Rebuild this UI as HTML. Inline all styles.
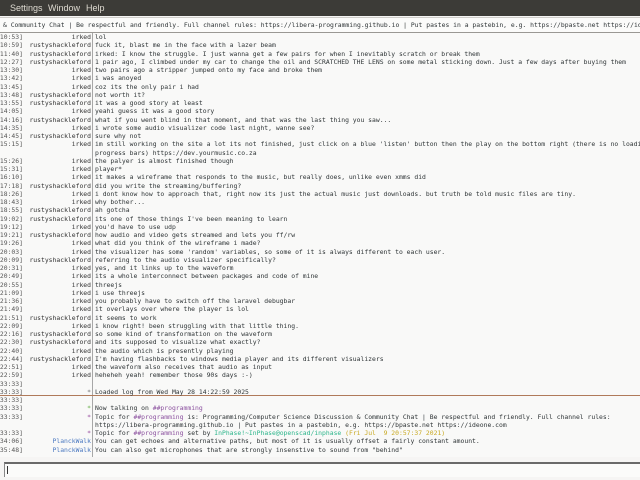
<!DOCTYPE html>
<html><head><meta charset="utf-8"><style>
html,body{margin:0;padding:0;width:640px;height:480px;overflow:hidden;background:#f6f5f4;}
#menu{position:absolute;left:0;top:0;width:640px;height:16px;background:#3c3b37;color:#dfdbd2;font:9px "Liberation Sans",sans-serif;}
#menu span{position:absolute;top:3px;}
#topicbar{position:absolute;left:0;top:17px;width:640px;height:14px;background:#fbfbfa;border-top:1px solid #cfcdc9;border-bottom:1px solid #9a9894;}
.m{font-family:"DejaVu Sans Mono","Liberation Mono",monospace;font-size:6.4px;white-space:pre;color:#2e3436;}
#topicbar div{position:absolute;left:3px;top:3px;}
#chat{position:absolute;left:0;top:33px;width:640px;height:424px;background:#f9f9f8;overflow:hidden;}
#div{position:absolute;left:92px;top:0;width:1px;height:424px;background:#a7a7a7;}
.l{position:absolute;left:0;height:8px;width:640px;}
.t{position:absolute;left:-4px;color:#555;}
.n{position:absolute;right:549px;text-align:right;color:#333;}
.x{position:absolute;left:95px;}
#sep{position:absolute;left:0;top:362px;width:640px;height:1px;background:#b07a5a;}
#input{position:absolute;left:4px;top:462px;width:640px;height:13px;background:#fbfbfa;border-top:2px solid #6a6a6a;border-left:1px solid #888;}
#caret{position:absolute;left:2px;top:2px;width:1px;height:8px;background:#333;}
</style></head><body>
<div id="menu"><span style="left:-3px">r</span><span style="left:10px">Settings</span><span style="left:48px">Window</span><span style="left:86px">Help</span></div>
<div id="topicbar"><div class="m">&amp; Community Chat | Be respectful and friendly. Full channel rules: https://libera-programming.github.io | Put pastes in a pastebin, e.g. https://bpaste.net https://ideone.com</div></div>
<div id="chat" class="m">
<div id="div"></div>
<div id="sep"></div>
<div class="l" style="top:0px"><span class="t">[10:53]</span><span class="n">irked</span><span class="x">lol</span></div>
<div class="l" style="top:8.25px"><span class="t">[10:59]</span><span class="n">rustyshackleford</span><span class="x">fuck it, blast me in the face with a lazer beam</span></div>
<div class="l" style="top:16.5px"><span class="t">[11:40]</span><span class="n">rustyshackleford</span><span class="x">irked: I know the struggle. I just wanna get a few pairs for when I inevitably scratch or break them</span></div>
<div class="l" style="top:24.75px"><span class="t">[12:27]</span><span class="n">rustyshackleford</span><span class="x">1 pair ago, I climbed under my car to change the oil and SCRATCHED THE LENS on some metal sticking down. Just a few days after buying them</span></div>
<div class="l" style="top:33px"><span class="t">[13:30]</span><span class="n">irked</span><span class="x">two pairs ago a stripper jumped onto my face and broke them</span></div>
<div class="l" style="top:41.25px"><span class="t">[13:42]</span><span class="n">irked</span><span class="x">i was anoyed</span></div>
<div class="l" style="top:49.5px"><span class="t">[13:45]</span><span class="n">irked</span><span class="x">coz its the only pair i had</span></div>
<div class="l" style="top:57.75px"><span class="t">[13:48]</span><span class="n">rustyshackleford</span><span class="x">not worth it?</span></div>
<div class="l" style="top:66px"><span class="t">[13:55]</span><span class="n">rustyshackleford</span><span class="x">it was a good story at least</span></div>
<div class="l" style="top:74.25px"><span class="t">[14:05]</span><span class="n">irked</span><span class="x">yeahi guess it was a good story</span></div>
<div class="l" style="top:82.5px"><span class="t">[14:16]</span><span class="n">rustyshackleford</span><span class="x">what if you went blind in that moment, and that was the last thing you saw...</span></div>
<div class="l" style="top:90.75px"><span class="t">[14:35]</span><span class="n">irked</span><span class="x">i wrote some audio visualizer code last night, wanne see?</span></div>
<div class="l" style="top:99px"><span class="t">[14:45]</span><span class="n">rustyshackleford</span><span class="x">sure why not</span></div>
<div class="l" style="top:107.25px"><span class="t">[15:15]</span><span class="n">irked</span><span class="x">im still working on the site a lot its not finished, just click on a blue 'listen' button then the play on the bottom right (there is no loading</span></div>
<div class="l" style="top:115.5px"><span class="x">progress bars) https://dev.yourmusic.co.za</span></div>
<div class="l" style="top:123.75px"><span class="t">[15:26]</span><span class="n">irked</span><span class="x">the palyer is almost finished though</span></div>
<div class="l" style="top:132px"><span class="t">[15:31]</span><span class="n">irked</span><span class="x">player*</span></div>
<div class="l" style="top:140.25px"><span class="t">[16:10]</span><span class="n">irked</span><span class="x">it makes a wireframe that responds to the music, but really does, unlike even xmms did</span></div>
<div class="l" style="top:148.5px"><span class="t">[17:18]</span><span class="n">rustyshackleford</span><span class="x">did you write the streaming/buffering?</span></div>
<div class="l" style="top:156.75px"><span class="t">[18:26]</span><span class="n">irked</span><span class="x">i dont know how to approach that, right now its just the actual music just downloads. but truth be told music files are tiny.</span></div>
<div class="l" style="top:165px"><span class="t">[18:43]</span><span class="n">irked</span><span class="x">why bother...</span></div>
<div class="l" style="top:173.25px"><span class="t">[18:55]</span><span class="n">rustyshackleford</span><span class="x">ah gotcha</span></div>
<div class="l" style="top:181.5px"><span class="t">[19:02]</span><span class="n">rustyshackleford</span><span class="x">its one of those things I've been meaning to learn</span></div>
<div class="l" style="top:189.75px"><span class="t">[19:12]</span><span class="n">irked</span><span class="x">you'd have to use udp</span></div>
<div class="l" style="top:198px"><span class="t">[19:21]</span><span class="n">rustyshackleford</span><span class="x">how audio and video gets streamed and lets you ff/rw</span></div>
<div class="l" style="top:206.25px"><span class="t">[19:26]</span><span class="n">irked</span><span class="x">what did you think of the wireframe i made?</span></div>
<div class="l" style="top:214.5px"><span class="t">[20:03]</span><span class="n">irked</span><span class="x">the visualizer has some 'random' variables, so some of it is always different to each user.</span></div>
<div class="l" style="top:222.75px"><span class="t">[20:09]</span><span class="n">rustyshackleford</span><span class="x">referring to the audio visualizer specifically?</span></div>
<div class="l" style="top:231px"><span class="t">[20:31]</span><span class="n">irked</span><span class="x">yes, and it links up to the waveform</span></div>
<div class="l" style="top:239.25px"><span class="t">[20:49]</span><span class="n">irked</span><span class="x">its a whole interconnect between packages and code of mine</span></div>
<div class="l" style="top:247.5px"><span class="t">[20:55]</span><span class="n">irked</span><span class="x">threejs</span></div>
<div class="l" style="top:255.75px"><span class="t">[21:09]</span><span class="n">irked</span><span class="x">i use threejs</span></div>
<div class="l" style="top:264px"><span class="t">[21:36]</span><span class="n">irked</span><span class="x">you probably have to switch off the laravel debugbar</span></div>
<div class="l" style="top:272.25px"><span class="t">[21:49]</span><span class="n">irked</span><span class="x">it overlays over where the player is lol</span></div>
<div class="l" style="top:280.5px"><span class="t">[21:51]</span><span class="n">rustyshackleford</span><span class="x">it seems to work</span></div>
<div class="l" style="top:288.75px"><span class="t">[22:09]</span><span class="n">irked</span><span class="x">i know right! been struggling with that little thing.</span></div>
<div class="l" style="top:297px"><span class="t">[22:16]</span><span class="n">rustyshackleford</span><span class="x">so some kind of transformation on the waveform</span></div>
<div class="l" style="top:305.25px"><span class="t">[22:30]</span><span class="n">rustyshackleford</span><span class="x">and its supposed to visualize what exactly?</span></div>
<div class="l" style="top:313.5px"><span class="t">[22:40]</span><span class="n">irked</span><span class="x">the audio which is presently playing</span></div>
<div class="l" style="top:321.75px"><span class="t">[22:44]</span><span class="n">rustyshackleford</span><span class="x">I'm having flashbacks to windows media player and its different visualizers</span></div>
<div class="l" style="top:330px"><span class="t">[22:51]</span><span class="n">irked</span><span class="x">the waveform also receives that audio as input</span></div>
<div class="l" style="top:338.25px"><span class="t">[22:59]</span><span class="n">irked</span><span class="x">heheheh yeah! remember those 90s days :-)</span></div>
<div class="l" style="top:346.5px"><span class="t">[33:33]</span></div>
<div class="l" style="top:354.75px"><span class="t">[33:33]</span><span class="n" style="color:#777">*</span><span class="x">Loaded log from Wed May 28 14:22:59 2025</span></div>
<div class="l" style="top:363px"><span class="t">[33:33]</span></div>
<div class="l" style="top:371.25px"><span class="t">[33:33]</span><span class="n" style="color:#6ab04c">*</span><span class="x">Now talking on <span style="color:#8a4f9e">##programming</span></span></div>
<div class="l" style="top:379.5px"><span class="t">[33:33]</span><span class="n" style="color:#9a4fa0">*</span><span class="x">Topic for <span style="color:#8a4f9e">##programming</span> is: Programming/Computer Science Discussion &amp; Community Chat | Be respectful and friendly. Full channel rules:</span></div>
<div class="l" style="top:387.75px"><span class="x">https://libera-programming.github.io | Put pastes in a pastebin, e.g. https://bpaste.net https://ideone.com</span></div>
<div class="l" style="top:396px"><span class="t">[33:33]</span><span class="n" style="color:#9a4fa0">*</span><span class="x">Topic for <span style="color:#8a4f9e">##programming</span> set by <span style="color:#2bb58a">InPhase!~InPhase@openscad/inphase</span> <span style="color:#c8a820">(Fri Jul  9 20:57:37 2021)</span></span></div>
<div class="l" style="top:404.25px"><span class="t">[34:06]</span><span class="n" style="color:#4a78c0">PlanckWalk</span><span class="x">You can get echoes and alternative paths, but most of it is usually offset a fairly constant amount.</span></div>
<div class="l" style="top:412.5px"><span class="t">[35:48]</span><span class="n" style="color:#4a78c0">PlanckWalk</span><span class="x">You can also get microphones that are strongly insenstive to sound from "behind"</span></div>
</div>
<div id="input"><div id="caret"></div></div>
</body></html>
